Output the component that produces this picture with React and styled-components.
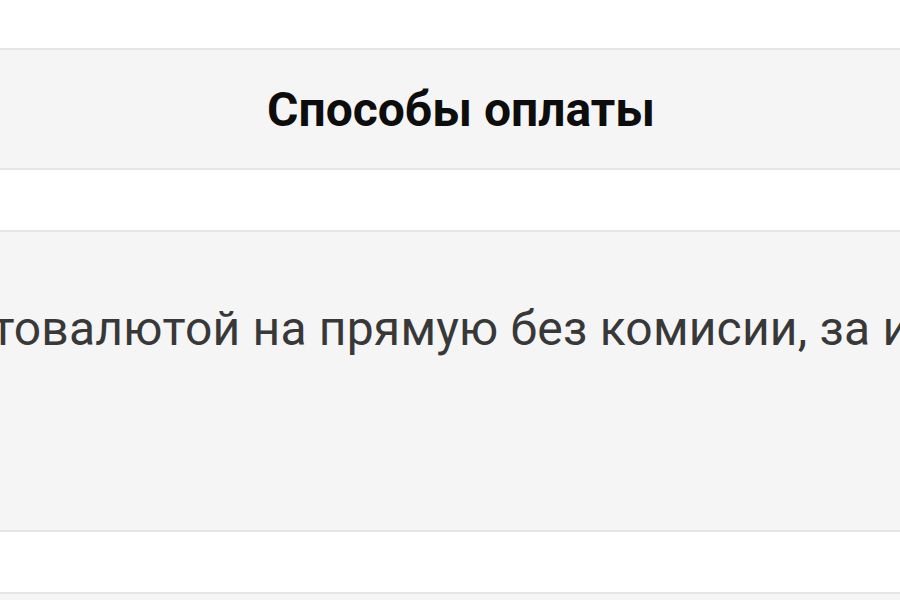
import React from "react";
import styled, { createGlobalStyle } from "styled-components";

const Global = createGlobalStyle`
  html, body { margin: 0; padding: 0; background: #ffffff; overflow: hidden; }
  body { font-family: Roboto, "Liberation Sans", sans-serif; }
`;

const Page = styled.div`
  width: 900px;
  height: 600px;
  overflow: hidden;
  display: flex;
  flex-direction: column;
  background: #ffffff;
`;

const Band = styled.div`
  flex: none;
  height: ${(p) => p.$h}px;
  background: ${(p) => (p.$gray ? "#f5f5f5" : "#ffffff")};
  border-bottom: ${(p) => (p.$line ? "2px solid #e6e6e6" : "none")};
  display: flex;
  flex-direction: column;
  overflow: hidden;
`;

const Title = styled.h2`
  margin: 0;
  flex: 1;
  display: flex;
  align-items: center;
  justify-content: center;
  padding-left: 22px;
  font-family: Roboto, "Liberation Sans", sans-serif;
  font-weight: 700;
  font-size: 48px;
  color: #0d0d0d;
`;

const Body = styled.p`
  margin: 0;
  padding-top: 68px;
  white-space: nowrap;
  text-indent: -294px;
  letter-spacing: 0.2px;
  font-family: Roboto, "Liberation Sans", sans-serif;
  font-size: 48px;
  line-height: 58px;
  color: #383838;
`;

export default function App() {
  return (
    <Page>
      <Global />
      <Band $h={48} $line />
      <Band $h={118} $gray $line>
        <Title>Способы оплаты</Title>
      </Band>
      <Band $h={60} $line />
      <Band $h={298} $gray $line>
        <Body>Оплата криптовалютой на прямую без комисии, за исключением комиссии сети</Body>
      </Band>
      <Band $h={60} $line />
      <Band $h={40} $gray />
    </Page>
  );
}
